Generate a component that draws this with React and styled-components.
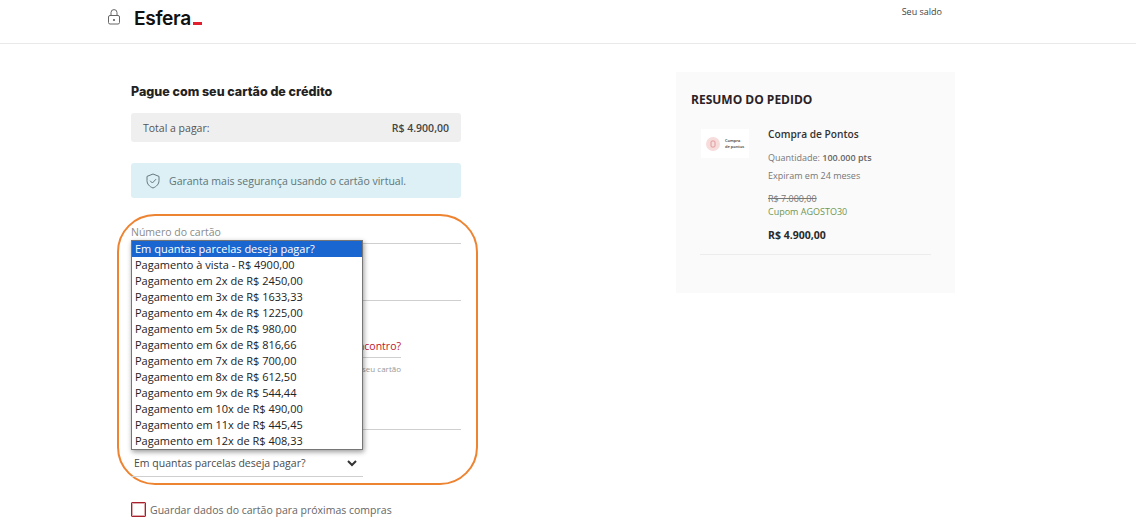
import React from 'react';
import styled, { createGlobalStyle } from 'styled-components';

const Global = createGlobalStyle`
  html, body { margin: 0; padding: 0; background: #fff; }
  body { font-family: "Open Sans", "Liberation Sans", sans-serif; color: #333; overflow: hidden; }
  * { box-sizing: border-box; }
`;

const Page = styled.div`
  width: 1136px;
  height: 518px;
  overflow: hidden;
`;

const Header = styled.header`
  height: 44px;
  border-bottom: 1px solid #e9e9e9;
  display: flex;
  padding-left: 107px;
`;

const Lock = styled.svg`
  width: 15px;
  height: 16px;
  margin-top: 9px;
  color: #666;
`;

const Logo = styled.div`
  margin-left: 12px;
  margin-top: 4px;
  font-family: Inter, "Noto Sans", sans-serif;
  font-weight: 600;
  font-size: 19.2px;
  line-height: 28px;
  letter-spacing: -0.35px;
  color: #111;
  display: flex;
  align-items: baseline;
`;

const LogoDash = styled.span`
  width: 9px;
  height: 3px;
  margin-left: 2px;
  background: #e0202f;
`;

const Balance = styled.div`
  margin-left: auto;
  margin-right: 194px;
  margin-top: 5px;
  font-size: 9px;
  line-height: 14px;
  color: #444;
`;

const Main = styled.main`
  display: grid;
  grid-template-columns: 330px 279px;
  column-gap: 215px;
  padding: 28px 0 0 131px;
  align-items: start;
`;

const Left = styled.section`
  display: flex;
  flex-direction: column;
`;

const Title = styled.h2`
  margin: 13px 0 0;
  font-family: Inter, "Noto Sans", sans-serif;
  font-weight: 800;
  font-size: 12.5px;
  line-height: 14px;
  color: #222;
`;

const TotalBar = styled.div`
  margin-top: 14px;
  height: 29px;
  border-radius: 3px;
  background: #efefef;
  padding: 0 12px;
  display: flex;
  align-items: center;
  justify-content: space-between;
  font-size: 10.5px;
  color: #555;
`;

const TotalValue = styled.span`
  font-weight: 600;
  color: #444;
`;

const Notice = styled.div`
  margin-top: 21px;
  height: 35px;
  border-radius: 3px;
  background: #dcf0f5;
  padding-left: 15px;
  display: flex;
  align-items: center;
  gap: 9px;
  font-size: 10.5px;
  color: #5f7479;
`;

const Shield = styled.svg`
  width: 14px;
  height: 16px;
  color: #65797d;
`;

const Ring = styled.div`
  position: relative;
  margin: 16px -17px 0 -14px;
  height: 271px;
  border: 2px solid #ed8432;
  border-radius: 38px;
  padding: 0 15px 0 12px;
  display: flex;
  flex-direction: column;
`;

const Field = styled.div`
  height: ${p => p.$h}px;
  width: 100%;
  border-bottom: 1px solid #cfcfcf;
`;

const FieldLabel = styled.div`
  padding-top: 9px;
  font-size: 10.5px;
  line-height: 15px;
  color: #8a8a8a;
`;

const SecurityRow = styled.div`
  display: flex;
  justify-content: flex-end;
  width: 100%;
`;

const SecurityColumn = styled.div`
  width: 200px;
  margin-right: 60px;
  text-align: right;
`;

const SecurityLink = styled.div`
  height: 57px;
  padding-top: 38px;
  border-bottom: 1px solid #cfcfcf;
  font-size: 10.5px;
  line-height: 15px;
  color: #c0142c;
`;

const SecurityHint = styled.div`
  padding-top: 5px;
  font-size: 8px;
  line-height: 12px;
  color: #999;
`;

const SelectField = styled.div`
  position: relative;
  margin-top: 17px;
  width: 232px;
  height: 30px;
  border-bottom: 1px solid #cfcfcf;
  padding: 9px 3px 0;
  display: flex;
  justify-content: space-between;
  font-size: 10.5px;
  line-height: 15px;
  color: #4a4a4a;
`;

const Chevron = styled.svg`
  width: 10px;
  height: 7px;
  margin: 4px 3px 0 0;
  color: #333;
`;

const Popup = styled.ul`
  position: absolute;
  left: 0;
  bottom: 26px;
  width: 232px;
  margin: 0;
  padding: 0;
  list-style: none;
  background: #fff;
  border: 1px solid #767676;
  box-shadow: 1px 2px 5px rgba(0, 0, 0, 0.4);
  z-index: 2;
`;

const Option = styled.li`
  height: 16px;
  padding-left: 3px;
  font-size: 11px;
  line-height: 16px;
  white-space: nowrap;
  color: ${p => (p.$active ? '#fff' : '#222')};
  background: ${p => (p.$active ? '#1a66d0' : '#fff')};
`;

const SaveRow = styled.label`
  margin-top: 17px;
  display: flex;
  align-items: center;
  gap: 4px;
  font-size: 10.5px;
  color: #666;
`;

const Box = styled.span`
  width: 15px;
  height: 15px;
  border: 1px solid #a8202c;
  border-radius: 1px;
  box-shadow: inset 0 0 0 1px rgba(176, 48, 58, 0.4);
`;

const Card = styled.aside`
  height: 221px;
  background: #fafafa;
  padding: 20px 24px 0 15px;
`;

const CardTitle = styled.h3`
  margin: 0;
  font-size: 12px;
  line-height: 16px;
  font-weight: 700;
  color: #2b2226;
`;

const Item = styled.div`
  margin: 19px 0 0 9px;
  height: 128px;
  border-bottom: 1px solid #ececec;
  display: flex;
  gap: 19px;
  align-items: flex-start;
`;

const Thumb = styled.div`
  margin: 2px 0 0 1px;
  width: 48px;
  height: 29px;
  background: #fff;
  display: flex;
  align-items: center;
  padding-left: 5px;
  gap: 5px;
`;

const ThumbIcon = styled.svg`
  width: 14px;
  height: 14px;
  flex: none;
`;

const ThumbText = styled.span`
  font-size: 4px;
  line-height: 5.5px;
  font-weight: 600;
  color: #333;
  white-space: nowrap;
`;

const ItemBody = styled.div`
  display: flex;
  flex-direction: column;
`;

const ItemName = styled.div`
  font-size: 10.2px;
  line-height: 14px;
  font-weight: 600;
  color: #333;
`;

const Meta = styled.div`
  margin-top: ${p => p.$mt}px;
  font-size: 9px;
  line-height: 12px;
  color: #777;
`;

const Strong = styled.b`
  font-weight: 600;
  color: #666;
`;

const OldPrice = styled.div`
  margin-top: 10px;
  font-size: 9px;
  line-height: 13px;
  color: #777;
  text-decoration: line-through;
`;

const Coupon = styled.div`
  font-size: 9px;
  line-height: 13px;
  color: #6f9650;
`;

const Price = styled.div`
  margin-top: 10px;
  font-size: 10.5px;
  line-height: 14px;
  font-weight: 700;
  color: #2a2a2a;
`;

const options = [
  'Em quantas parcelas deseja pagar?',
  'Pagamento à vista - R$ 4900,00',
  'Pagamento em 2x de R$ 2450,00',
  'Pagamento em 3x de R$ 1633,33',
  'Pagamento em 4x de R$ 1225,00',
  'Pagamento em 5x de R$ 980,00',
  'Pagamento em 6x de R$ 816,66',
  'Pagamento em 7x de R$ 700,00',
  'Pagamento em 8x de R$ 612,50',
  'Pagamento em 9x de R$ 544,44',
  'Pagamento em 10x de R$ 490,00',
  'Pagamento em 11x de R$ 445,45',
  'Pagamento em 12x de R$ 408,33',
];

export default function App() {
  return (
    <Page>
      <Global />
      <Header>
        <Lock viewBox="0 0 15 16" fill="none" stroke="currentColor" strokeWidth="1">
          <rect x="1.5" y="6.5" width="11" height="8.5" rx="1.5" />
          <path d="M4 6.5V3.6a3 3 0 0 1 6 0v2.9" />
          <circle cx="7" cy="11" r="0.7" fill="currentColor" />
        </Lock>
        <Logo>
          Esfera<LogoDash />
        </Logo>
        <Balance>Seu saldo</Balance>
      </Header>
      <Main>
        <Left>
          <Title>Pague com seu cartão de crédito</Title>
          <TotalBar>
            <span>Total a pagar:</span>
            <TotalValue>R$ 4.900,00</TotalValue>
          </TotalBar>
          <Notice>
            <Shield viewBox="0 0 14 16" fill="none" stroke="currentColor" strokeWidth="1" strokeLinejoin="round">
              <path d="M7 1l6 2.4v4.2c0 3.4-2.4 6-6 7.4-3.6-1.4-6-4-6-7.4V3.4L7 1z" />
              <path d="M4.4 8l2 2 3.4-3.6" strokeLinecap="round" />
            </Shield>
            Garanta mais segurança usando o cartão virtual.
          </Notice>
          <Ring>
            <Field $h={28}>
              <FieldLabel>Número do cartão</FieldLabel>
            </Field>
            <Field $h={57} />
            <SecurityRow>
              <SecurityColumn>
                <SecurityLink>Onde encontro?</SecurityLink>
                <SecurityHint>Os 3 dígitos no verso do seu cartão</SecurityHint>
              </SecurityColumn>
            </SecurityRow>
            <Field $h={55} />
            <SelectField>
              <span>Em quantas parcelas deseja pagar?</span>
              <Chevron viewBox="0 0 10 7" fill="none" stroke="currentColor" strokeWidth="2">
                <path d="M1 1l4 4 4-4" />
              </Chevron>
              <Popup>
                {options.map((o, i) => (
                  <Option key={o} $active={i === 0}>{o}</Option>
                ))}
              </Popup>
            </SelectField>
          </Ring>
          <SaveRow>
            <Box />
            Guardar dados do cartão para próximas compras
          </SaveRow>
        </Left>
        <Card>
          <CardTitle>RESUMO DO PEDIDO</CardTitle>
          <Item>
            <Thumb>
              <ThumbIcon viewBox="0 0 14 14">
                <circle cx="7" cy="7" r="7" fill="#f7dcdc" />
                <rect x="5" y="4" width="4" height="6" rx="1" fill="none" stroke="#d98a8a" strokeWidth="0.8" />
              </ThumbIcon>
              <ThumbText>Compra<br />de pontos</ThumbText>
            </Thumb>
            <ItemBody>
              <ItemName>Compra de Pontos</ItemName>
              <Meta $mt={11}>Quantidade: <Strong>100.000 pts</Strong></Meta>
              <Meta $mt={6}>Expiram em 24 meses</Meta>
              <OldPrice>R$ 7.000,00</OldPrice>
              <Coupon>Cupom AGOSTO30</Coupon>
              <Price>R$ 4.900,00</Price>
            </ItemBody>
          </Item>
        </Card>
      </Main>
    </Page>
  );
}
